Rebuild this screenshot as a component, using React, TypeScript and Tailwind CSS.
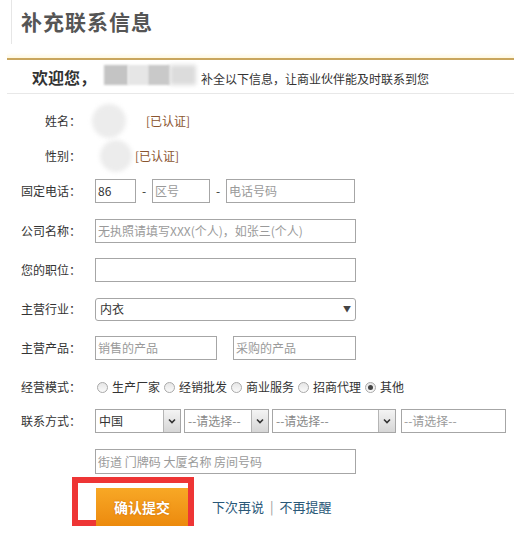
import type { ReactNode } from "react";

const font = { fontFamily: '"Noto Sans CJK SC", "Noto Sans", sans-serif' };

function Row({ label, mt, h = "h-[24px]", children }: { label?: string; mt: string; h?: string; children?: ReactNode }) {
  return (
    <div className={`flex items-center ${mt} ${h}`}>
      <div className="w-[81px] shrink-0 text-right text-[12px] text-[#333]">{label}</div>
      <div className="ml-[14px] flex items-center h-full">{children}</div>
    </div>
  );
}

function TextBox({ w, placeholder, value }: { w: string; placeholder?: string; value?: string }) {
  return (
    <div className={`${w} h-full border border-[#a6a6a6] flex items-center px-[2px] text-[12px] whitespace-nowrap overflow-hidden`}>
      {value ? <span className="text-[#333]">{value}</span> : <span className="text-[#9a9a9a]">{placeholder}</span>}
    </div>
  );
}

function OldSelect({ w, value }: { w: string; value: string }) {
  return (
    <div className={`${w} h-full border border-[#a6a6a6] flex items-center text-[12px]`}>
      <span className={`flex-1 px-[3px] ${value === "中国" ? "text-[#333]" : "text-[#888]"}`}>{value}</span>
      <div className="w-[17px] h-full border-l border-[#b5b5b5] bg-gradient-to-b from-[#f4f4f4] to-[#d6d6d6] flex items-center justify-center">
        <svg width="8" height="6" viewBox="0 0 8 6">
          <path d="M1 1.5 L4 4.5 L7 1.5" fill="none" stroke="#333" strokeWidth="1.6" />
        </svg>
      </div>
    </div>
  );
}

function Radio({ checked, text }: { checked?: boolean; text: string }) {
  return (
    <span className="flex items-center mr-[4px]">
      <span className="w-[11px] h-[11px] rounded-full border border-[#a9a9a9] bg-gradient-to-b from-[#e6e6e6] to-[#fafafa] flex items-center justify-center">
        {checked && <span className="w-[5px] h-[5px] rounded-full bg-[#444]" />}
      </span>
      <span className="ml-[4px] text-[12px] text-[#333]">{text}</span>
    </span>
  );
}

function Blur({ className }: { className: string }) {
  return <div className={`rounded-full bg-[#ececec] blur-[2px] ${className}`} />;
}

export default function App() {
  return (
    <div className="w-[521px] h-[541px] bg-white overflow-hidden" style={font}>
      <div className="ml-[11px] h-[44px] border-l border-[#e6e6e6] pl-[9px] flex items-center">
        <h1 className="text-[21px] font-bold text-[#555] tracking-[1px]">补充联系信息</h1>
      </div>

      <div className="mt-[9px] h-[5px] mx-[7px] bg-gradient-to-b from-white to-[#fff8e0]" />
      <div className="mx-[7px] border-t-2 border-[#c9a65e] border-b border-b-[#e8e8e8] h-[36px] flex items-center pl-[25px]">
        <span className="text-[16px] text-[#333] font-bold">欢迎您，</span>
        <div className="relative w-[105px] h-[22px] -mt-[2px]">
          <div className="absolute left-[8px] top-0 w-[24px] h-[20px] bg-[#c4c4c4] blur-[1px]" />
          <div className="absolute left-[32px] top-0 w-[20px] h-[20px] bg-[#e6e6e6] blur-[1px]" />
          <div className="absolute left-[52px] top-0 w-[22px] h-[20px] bg-[#c9c9c9] blur-[1px]" />
          <div className="absolute left-[74px] top-0 w-[26px] h-[20px] bg-[#dcdcdc] blur-[2px]" />
        </div>
        <span className="text-[12px] text-[#333] mt-[4px]">补全以下信息，让商业伙伴能及时联系到您</span>
      </div>

      <Row label="姓名：" mt="mt-[15px]">
        <Blur className="w-[34px] h-[34px] -ml-[3px]" />
        <span className="ml-[20px] text-[12px] text-[#8a5530]">[已认证]</span>
      </Row>
      <Row label="性别：" mt="mt-[11px]">
        <Blur className="w-[32px] h-[32px] ml-[5px]" />
        <span className="ml-[3px] text-[12px] text-[#8a5530]">[已认证]</span>
      </Row>
      <Row label="固定电话：" mt="mt-[11px]">
        <TextBox w="w-[41px]" value="86" />
        <span className="w-[16px] text-center text-[12px] text-[#333]">-</span>
        <TextBox w="w-[58px]" placeholder="区号" />
        <span className="w-[16px] text-center text-[12px] text-[#333]">-</span>
        <TextBox w="w-[129px]" placeholder="电话号码" />
      </Row>
      <Row label="公司名称：" mt="mt-[16px]">
        <TextBox w="w-[261px]" placeholder="无执照请填写XXX(个人)，如张三(个人)" />
      </Row>
      <Row label="您的职位：" mt="mt-[15px]">
        <TextBox w="w-[261px]" />
      </Row>
      <Row label="主营行业：" mt="mt-[15px]">
        <div className="w-[261px] h-[23px] border border-[#a6a6a6] rounded-[3px] flex items-center justify-between px-[4px] text-[12px] text-[#333]">
          <span>内衣</span>
          <span className="text-[8px] text-[#444]">▼</span>
        </div>
      </Row>
      <Row label="主营产品：" mt="mt-[15px]">
        <TextBox w="w-[122px]" placeholder="销售的产品" />
        <div className="w-[16px]" />
        <TextBox w="w-[123px]" placeholder="采购的产品" />
      </Row>
      <Row label="经营模式：" mt="mt-[15px]">
        <div className="flex items-center ml-[2px]">
          <Radio text="生产厂家" />
          <Radio text="经销批发" />
          <Radio text="商业服务" />
          <Radio text="招商代理" />
          <Radio checked text="其他" />
        </div>
      </Row>
      <Row label="联系方式：" mt="mt-[10px]">
        <OldSelect w="w-[86px]" value="中国" />
        <div className="w-[3px]" />
        <OldSelect w="w-[85px]" value="--请选择--" />
        <div className="w-[3px]" />
        <OldSelect w="w-[124px]" value="--请选择--" />
        <div className="w-[5px]" />
        <TextBox w="w-[105px]" placeholder="--请选择--" />
      </Row>
      <Row mt="mt-[16px]" h="h-[25px]">
        <TextBox w="w-[261px]" placeholder="街道 门牌码 大厦名称 房间号码" />
      </Row>

      <div className="flex items-center mt-[3px]">
        <div className="ml-[72px] w-[122px] h-[49px] border-[6px] border-[#ee3535] flex bg-white">
          <div className="w-[18px]" />
          <div className="flex-1 mt-[5px] -mb-[6px] bg-gradient-to-b from-[#f8a825] to-[#ec8a0c] flex items-center justify-center">
            <span className="text-[14px] font-bold text-white [text-shadow:0_0_2px_#c86a00]">确认提交</span>
          </div>
        </div>
        <div className="ml-[18px] mt-[10px] flex items-center text-[13px] text-[#2a5878]">
          <span>下次再说</span>
          <span className="mx-[6px] text-[#999]">|</span>
          <span>不再提醒</span>
        </div>
      </div>
    </div>
  );
}
